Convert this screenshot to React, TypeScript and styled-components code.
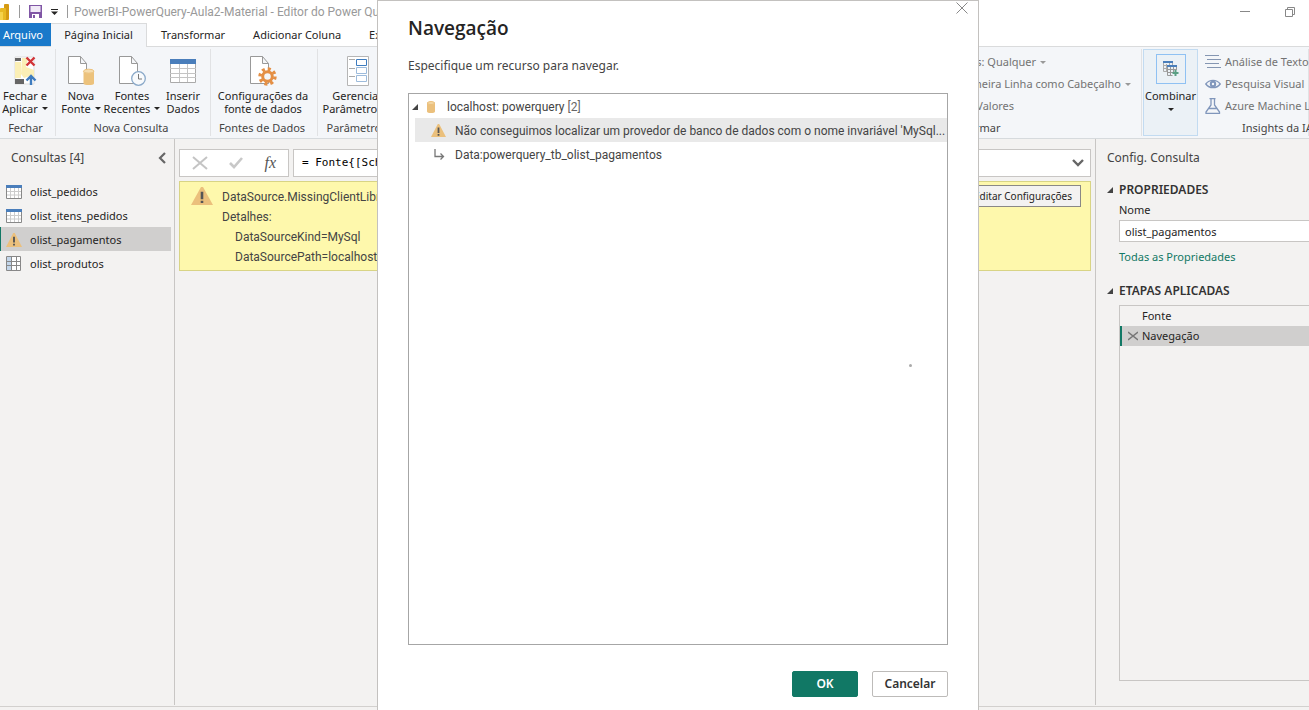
import React from 'react';
import styled, { createGlobalStyle, css } from 'styled-components';

const sans = '"Noto Sans", "Open Sans", sans-serif';
const ui = 'Roboto, "Noto Sans", sans-serif';
const green = '#117865';

const GlobalStyle = createGlobalStyle`
  *, *::before, *::after { box-sizing: border-box; }
  body {
    margin: 0;
    background: #f3f2f1;
    color: #252423;
    font-family: ${sans};
    font-size: 11px;
    line-height: 20px;
    overflow: hidden;
  }
  button, input { font: inherit; color: inherit; }
  button { margin: 0; padding: 0; border: 0; background: none; }
  h1, h2, h3, p, ul { margin: 0; padding: 0; font: inherit; }
  ul { list-style: none; }
  svg { display: block; flex: none; }
`;

const Page = styled.div`
  display: flex;
  flex-direction: column;
  min-height: 100vh;
  overflow: hidden;
`;

/* ---------- title bar ---------- */

const TitleBar = styled.header`
  display: flex;
  align-items: center;
  height: 23px;
  padding-right: 14px;
  background: #fff;
`;

const Divider = styled.span`
  width: 1px;
  height: 13px;
  background: #9a9a9a;
`;

const QuickAccess = styled.div`
  display: flex;
  align-items: center;
  gap: 9px;
  width: 74px;
`;

const WindowTitle = styled.h1`
  flex: 1;
  color: #999;
  font-family: ${ui};
  font-size: 12px;
  white-space: nowrap;
`;

const WindowButtons = styled.div`
  display: flex;
  align-items: center;
  gap: 34px;
  height: 20px;
`;

/* ---------- tabs ---------- */

const Tabs = styled.nav`
  display: flex;
  height: 24px;
  background: #fff;
  border-bottom: 1px solid #dadbdc;
`;

const Tab = styled.button<{ $kind?: 'file' | 'active' }>`
  flex: none;
  padding: 0 14px;
  height: 23px;
  color: #252423;
  white-space: nowrap;
  ${p => p.$kind === 'file' && css`
    width: 51px;
    padding: 0 3px;
    color: #fff;
    background: #1979ca;
    text-align: left;
  `}
  ${p => p.$kind === 'active' && css`
    width: 96px;
    height: 24px;
    padding: 0 0 1px;
    background: #f4f6f9;
    border: 1px solid #dadbdc;
    border-bottom: 0;
    border-left: 0;
  `}
`;

/* ---------- ribbon ---------- */

const RibbonBar = styled.section`
  display: flex;
  height: 92px;
  padding: 2px 0;
  background: #f4f6f9;
  border-bottom: 1px solid #d6dadd;
`;

const Spacer = styled.div`
  flex: 1;
`;

const Group = styled.div<{ $width: number }>`
  display: flex;
  flex-direction: column;
  flex: none;
  width: ${p => p.$width}px;
  border-right: 1px solid #e1e2e4;
  white-space: nowrap;
`;

const GroupBody = styled.div<{ $align?: 'start' | 'end' }>`
  display: flex;
  flex: 1;
  justify-content: ${p => (p.$align ? `flex-${p.$align}` : 'center')};
  padding-right: ${p => (p.$align === 'end' ? 10 : 2)}px;
`;

const GroupLabel = styled.div<{ $left?: boolean }>`
  height: 16px;
  padding: ${p => (p.$left ? '0 0 0 44px' : '0 4px 0 0')};
  color: #444;
  line-height: 16px;
  text-align: ${p => (p.$left ? 'left' : 'center')};
`;

const BigButton = styled.button<{ $width: number }>`
  display: flex;
  flex-direction: column;
  align-items: center;
  gap: 2px;
  width: ${p => p.$width}px;
  padding-top: 6px;
  line-height: 13px;
`;

const IconSlot = styled.span`
  display: flex;
  align-items: center;
  justify-content: center;
  height: 32px;
`;

const Line = styled.span`
  display: flex;
  align-items: center;
  justify-content: center;
  gap: 4px;
`;

const SmallList = styled.div<{ $width?: number }>`
  display: flex;
  flex-direction: column;
  width: ${p => (p.$width ? `${p.$width}px` : 'auto')};
  padding-top: 2px;
`;

const SmallButton = styled.button<{ $indent?: number }>`
  display: flex;
  align-items: center;
  gap: 4px;
  height: 22px;
  padding-left: ${p => p.$indent ?? 4}px;
  color: #737373;
  white-space: nowrap;
`;

const CombineButton = styled.button`
  display: flex;
  flex-direction: column;
  align-items: center;
  flex: none;
  gap: 5px;
  width: 55px;
  margin-left: 1px;
  padding-top: 4px;
  color: #252423;
  background: #ebf1f6;
  border: 1px solid #c2dbf1;
  line-height: 14px;
`;

const CombineIcon = styled.span`
  display: flex;
  align-items: center;
  justify-content: center;
  width: 30px;
  height: 30px;
  border: 1px solid #8fc1f3;
`;

/* ---------- workspace ---------- */

const Workspace = styled.div`
  display: flex;
  flex: 1;
`;

const StatusBar = styled.footer`
  height: 4px;
  margin-top: 1px;
  border-top: 1px solid #d2d0ce;
`;

const QueriesPane = styled.aside`
  flex: none;
  width: 175px;
  border-right: 1px solid #c8c6c4;
`;

const PaneHeader = styled.div`
  display: flex;
  align-items: center;
  justify-content: space-between;
  height: 38px;
  padding: 0 8px 0 11px;
`;

const PaneTitle = styled.h2`
  color: #444;
  font-size: 12px;
`;

const QueryList = styled.ul`
  padding: 2px 3px 0 0;
`;

const QueryItem = styled.li<{ $selected?: boolean }>`
  display: flex;
  align-items: center;
  gap: 8px;
  height: 24px;
  padding: 1px 0 0 5px;
  border-left: 1px solid ${p => (p.$selected ? green : 'transparent')};
  background: ${p => (p.$selected ? '#d0cfce' : 'transparent')};
`;

const Editor = styled.main`
  display: flex;
  flex: 1;
  flex-direction: column;
  gap: 4px;
  min-width: 0;
  padding: 10px 4px;
`;

const FormulaRow = styled.div`
  display: flex;
  gap: 4px;
`;

const FormulaButtons = styled.div`
  display: flex;
  align-items: center;
  justify-content: space-between;
  width: 110px;
  height: 28px;
  padding: 0 12px;
  background: #fff;
  border: 1px solid #c8c6c4;
`;

const FxButton = styled.button`
  color: #555;
  font-family: "Liberation Serif", serif;
  font-size: 16px;
  font-style: italic;
`;

const FormulaField = styled.div`
  display: flex;
  align-items: center;
  flex: 1;
  height: 28px;
  padding: 0 6px 0 8px;
  background: #fff;
  border: 1px solid #c8c6c4;
`;

const FormulaInput = styled.input`
  flex: 1;
  min-width: 0;
  padding: 0;
  border: 0;
  outline: 0;
  background: none;
  color: #000;
  font-family: "DejaVu Sans Mono", monospace;
`;

const ErrorPanel = styled.section`
  display: flex;
  align-items: flex-start;
  gap: 9px;
  height: 90px;
  padding: 3px 9px 0 11px;
  background: #fef8ac;
  border: 1px solid #d8d485;
`;

const WarningSlot = styled.span`
  padding-top: 2px;
`;

const ErrorText = styled.div`
  flex: 1;
  padding-top: 2px;
  color: #444;
  font-family: ${ui};
  font-size: 12px;
  white-space: nowrap;
`;

const Indented = styled.p`
  padding-left: 13px;
`;

const EditButton = styled.button`
  width: 116px;
  height: 22px;
  background: #f3f2f1;
  border: 1px solid #8a8886;
  font-size: 10px;
  line-height: 20px;
  white-space: nowrap;
`;

const SettingsPane = styled.aside`
  display: flex;
  flex-direction: column;
  flex: none;
  width: 214px;
  padding-bottom: 24px;
  border-left: 1px solid #c8c6c4;
`;

const SectionTitle = styled.h3`
  display: flex;
  align-items: center;
  gap: 6px;
  height: 20px;
  padding-left: 11px;
  font-size: 12px;
  font-weight: 600;
  color: #333;
`;

const Properties = styled.div`
  padding-top: 3px;
`;

const Field = styled.div`
  display: flex;
  flex-direction: column;
  padding: 0 0 7px 23px;
`;

const NameInput = styled.input`
  height: 22px;
  min-width: 0;
  padding: 0 5px;
  background: #fff;
  border: 1px solid #c8c6c4;
  border-right: 0;
  border-radius: 0;
  outline: 0;
`;

const Link = styled.a`
  height: 32px;
  padding-top: 4px;
  color: ${green};
  text-decoration: none;
  line-height: 22px;
`;

const Steps = styled.ul`
  flex: 1;
  margin: 4px 0 0 23px;
  border: 1px solid #c8c6c4;
  border-right: 0;
`;

const Step = styled.li<{ $selected?: boolean }>`
  display: flex;
  align-items: center;
  gap: 4px;
  height: 20px;
  padding-left: ${p => (p.$selected ? 6 : 20)}px;
  border-left: 2px solid ${p => (p.$selected ? green : 'transparent')};
  background: ${p => (p.$selected ? '#d0cfce' : 'transparent')};
`;

/* ---------- dialog ---------- */

const Overlay = styled.div`
  position: fixed;
  inset: 0;
  display: flex;
  justify-content: center;
  padding-left: 47px;
`;

const Dialog = styled.section`
  position: relative;
  display: flex;
  flex-direction: column;
  width: 602px;
  padding: 12px 30px 13px;
  background: #fff;
  border: 1px solid #c3c1bf;
  border-bottom: 0;
`;

const CloseButton = styled.button`
  position: absolute;
  top: 1px;
  right: 10px;
`;

const DialogTitle = styled.h2`
  height: 43px;
  color: #252423;
  font-family: "Open Sans", sans-serif;
  font-size: 19px;
  font-weight: 600;
  line-height: 30px;
`;

const DialogText = styled.p`
  height: 37px;
  color: #444;
  font-size: 12px;
`;

const Tree = styled.ul`
  position: relative;
  flex: 1;
  border: 1px solid #a6a6a6;
  color: #444;
  font-family: ${ui};
  font-size: 12px;
`;

const TreeItem = styled.li<{ $child?: boolean; $selected?: boolean }>`
  display: flex;
  align-items: center;
  height: 24px;
  margin-left: ${p => (p.$child ? 6 : 0)}px;
  padding: ${p => (p.$child ? '1px 0 0 16px' : '1px 0 0 3px')};
  background: ${p => (p.$selected ? '#e9e9e9' : 'transparent')};
  white-space: nowrap;
`;

const TreeIcon = styled.span<{ $width: number }>`
  display: flex;
  flex: none;
  width: ${p => p.$width}px;
`;

const Muted = styled.span`
  color: #666;
`;

const Dot = styled.span`
  position: absolute;
  left: 93%;
  top: 49%;
  width: 3px;
  height: 3px;
  border-radius: 50%;
  background: #aaa;
`;

const Actions = styled.div`
  display: flex;
  justify-content: flex-end;
  gap: 14px;
  padding-top: 26px;
`;

const ActionButton = styled.button<{ $primary?: boolean }>`
  width: ${p => (p.$primary ? 66 : 76)}px;
  height: 26px;
  border: 1px solid ${p => (p.$primary ? green : '#bdbbb9')};
  border-radius: 2px;
  background: ${p => (p.$primary ? green : '#fff')};
  color: ${p => (p.$primary ? '#fff' : '#333')};
  font-size: 12px;
  font-weight: 600;
`;

/* ---------- drawings ---------- */

const Caret = ({ color = '#252423' }: { color?: string }) => (
  <svg width="6" height="3" viewBox="0 0 6 3"><path d="M0 0h6L3 3z" fill={color} /></svg>
);

const Expander = () => (
  <svg width="6" height="6" viewBox="0 0 6 6"><path d="M6 0v6H0z" fill="#444" /></svg>
);

const LogoIcon = () => (
  <svg width="10" height="16" viewBox="0 0 10 16">
    <rect x="4" y="0" width="5" height="16" rx="1" fill="#d59a12" />
    <rect x="0" y="4" width="6" height="12" rx="1" fill="#e8b923" />
    <rect x="0" y="8" width="3" height="8" fill="#f5d24a" />
  </svg>
);

const SaveIcon = () => (
  <svg width="13" height="13" viewBox="0 0 13 13">
    <path d="M0 0h13v13H0z" fill="#8056a5" />
    <path d="M1.500 1h10v6h-10z" fill="#f1eaf7" />
    <path d="M3 9h7v4H3z" fill="#fff" />
    <path d="M4 10h2v3H4z" fill="#8056a5" />
  </svg>
);

const QuickMenuIcon = () => (
  <svg width="7" height="6" viewBox="0 0 7 6"><path d="M0 0h7v1H0zM0 2.500h7L3.500 6z" fill="#252423" /></svg>
);

const MinimizeIcon = () => (
  <svg width="11" height="11" viewBox="0 0 11 11"><path d="M0 5.500h10" stroke="#888" /></svg>
);

const RestoreIcon = () => (
  <svg width="10" height="10" viewBox="0 0 10 10" fill="none" stroke="#888">
    <path d="M.5 2.500h7v7h-7zM2.500 2.500v-2h7v7h-2" />
  </svg>
);

const PageShape = () => (
  <path d="M1.500.5h12l6 7v20h-18zM13.500.5v7h6" fill="#fff" stroke="#999" />
);

const CloseApplyIcon = () => (
  <svg width="24" height="30" viewBox="0 0 24 30">
    <path d="M2 1h19v27H2z" fill="#fff" stroke="#ddd" />
    <path d="M2 6h6v16H2zM9 2h6l-2 9 8 3v10l-4-4-6 2-3-4z" fill="#fbefb6" />
    <path d="M2 2h6v3H2zM2 23h9v5H2z" fill="#666" />
    <path d="M13.500 1.500l8 8M21.500 1.500l-8 8" stroke="#d13438" strokeWidth="2.400" />
    <path d="M18 29V20M13.500 24.500L18 20l4.500 4.500" stroke="#3e7cbf" strokeWidth="2.400" fill="none" />
  </svg>
);

const NewSourceIcon = () => (
  <svg width="28" height="30" viewBox="0 0 28 30">
    <PageShape />
    <path d="M16.500 15v12.500c0 2 10.500 2 10.500 0V15z" fill="#ecc27c" />
    <ellipse cx="21.700" cy="15.200" rx="5.200" ry="2" fill="#f5dcae" stroke="#ecc27c" />
  </svg>
);

const RecentIcon = () => (
  <svg width="28" height="30" viewBox="0 0 28 30">
    <PageShape />
    <circle cx="20.500" cy="22.500" r="6.800" fill="#f8fafc" stroke="#8aa9c9" strokeWidth="1.300" />
    <path d="M20.500 18v5h3.500" fill="none" stroke="#777" />
  </svg>
);

const TableIcon = () => (
  <svg width="26" height="24" viewBox="0 0 26 24">
    <path d="M.5 1h25v22.500H.5z" fill="#fff" stroke="#aaa" />
    <path d="M9.500 5v18M17.500 5v18M0 9.500h26M0 14.500h26M0 18.500h26" stroke="#c4c4c4" />
    <path d="M0 0h26v5H0z" fill="#4a7ebb" />
  </svg>
);

const SourceSettingsIcon = () => (
  <svg width="28" height="30" viewBox="0 0 28 30">
    <PageShape />
    <circle cx="18.500" cy="20.500" r="7.500" fill="none" stroke="#e48f45" strokeWidth="3.400" strokeDasharray="3 2.890" />
    <circle cx="18.500" cy="20.500" r="4.800" fill="#f4f6f9" stroke="#e48f45" strokeWidth="3" />
  </svg>
);

const ParametersIcon = () => (
  <svg width="22" height="30" viewBox="0 0 22 30">
    <path d="M.5.5h21v29H.5z" fill="#fff" stroke="#b5b5b5" />
    <path d="M2 3.500h6M2 12.500h6M2 20.500h6" stroke="#aaa" />
    <path d="M9.500 3.500h10v6h-10z" fill="#fff" stroke="#3e7cbf" />
    <path d="M9.500 11.500h10v6h-10zM9.500 19.500h10v6h-10z" fill="#fff" stroke="#9dbbdb" />
  </svg>
);

const CombineTablesIcon = () => (
  <svg width="16" height="16" viewBox="0 0 16 16">
    <path d="M.5 2v8.500H4M3.500 3v7M6.500 2v2M9.500 2v2M0 4.500h4M0 7.500h4" stroke="#aaa" fill="none" />
    <path d="M0 0h10v2H0z" fill="#4a7ebb" />
    <path d="M4.500 6v8.500h5M7.500 6v8M10.500 6v5M13.500 6v3M4 8.500h10M4 11.500h6" stroke="#999" fill="none" />
    <path d="M4 4h10v2H4z" fill="#4a7ebb" />
    <path d="M12.500 9v6M9.500 12h6" stroke="#5aa085" strokeWidth="2" />
  </svg>
);

const TextIcon = () => (
  <svg width="16" height="14" viewBox="0 0 16 14">
    <path d="M0 .5h14M2 4.500h14M0 8.500h14M2 12.500h14" stroke="#8596b2" />
  </svg>
);

const EyeIcon = () => (
  <svg width="16" height="10" viewBox="0 0 16 10" fill="none" stroke="#8096bb" strokeWidth="1.400">
    <path d="M.8 5C4.500.2 11.500.2 15.200 5 11.500 9.800 4.500 9.800.8 5z" />
    <circle cx="8" cy="5" r="2.200" strokeWidth="2" />
  </svg>
);

const FlaskIcon = () => (
  <svg width="16" height="16" viewBox="0 0 16 16" fill="none" stroke="#8096bb" strokeWidth="1.300">
    <path d="M4.500.7h6M6 1v6L1 14v1.300h13.500V14L9.500 7V1M3.800 10.500h8" />
  </svg>
);

const TableGlyph = () => (
  <svg width="14" height="12" viewBox="0 0 16 14">
    <path d="M.5.5h15v13H.5zM1 5h14M8 5v8" fill="none" stroke="#aaa" />
  </svg>
);

const QueryTableIcon = () => (
  <svg width="16" height="14" viewBox="0 0 16 14">
    <path d="M.5.5h15v13H.5z" fill="#fff" stroke="#888" />
    <path d="M4.500 3v10M8.500 3v10M12.500 3v10M1 6.500h14M1 10h14" stroke="#ccc" />
    <path d="M0 0h16v3H0z" fill="#4a7ebb" />
  </svg>
);

const QueryGridIcon = () => (
  <svg width="16" height="16" viewBox="0 0 16 16">
    <path d="M.5.5h14v14H.5z" fill="#fff" stroke="#888" />
    <path d="M1 1h5v13H1z" fill="#c3d6ea" />
    <path d="M5.500 1v13M10.500 1v13M1 5.500h13M1 9.500h13" stroke="#888" />
  </svg>
);

const WarningIcon = ({ width, height }: { width: number; height: number }) => (
  <svg width={width} height={height} viewBox="0 0 22 19" preserveAspectRatio="none">
    <path d="M10 0h2l10 19H0z" fill="#ebc07c" />
    <path d="M9.700 5h2.600v8H9.700zM9.700 14.500h2.600V17H9.700z" fill="#555" />
  </svg>
);

const CollapseIcon = () => (
  <svg width="8" height="12" viewBox="0 0 8 12"><path d="M7 1L2 6l5 5" fill="none" stroke="#666" strokeWidth="2.200" /></svg>
);

const ExpandIcon = () => (
  <svg width="12" height="8" viewBox="0 0 12 8"><path d="M1 1l5 5 5-5" fill="none" stroke="#666" strokeWidth="2.400" /></svg>
);

const CancelIcon = () => (
  <svg width="16" height="14" viewBox="0 0 16 14"><path d="M1 1l14 12M15 1L1 13" stroke="#c4c4c4" strokeWidth="2" /></svg>
);

const CheckIcon = () => (
  <svg width="14" height="12" viewBox="0 0 14 12"><path d="M1 6l4 4 8-9" fill="none" stroke="#c8c8c8" strokeWidth="2.600" /></svg>
);

const DeleteIcon = () => (
  <svg width="10" height="10" viewBox="0 0 10 10"><path d="M0 1l10 8M10 1L0 9" stroke="#777" strokeWidth="1.400" /></svg>
);

const DialogCloseIcon = () => (
  <svg width="12" height="12" viewBox="0 0 12 12"><path d="M.5.5l11 11M11.500.5l-11 11" stroke="#888" /></svg>
);

const DatabaseIcon = () => (
  <svg width="8" height="12" viewBox="0 0 8 12">
    <path d="M0 1.500v9c0 2 8 2 8 0v-9z" fill="#ebc07c" />
    <ellipse cx="4" cy="2" rx="3.500" ry="1.500" fill="#f3d7a4" stroke="#ebc07c" />
  </svg>
);

const BranchIcon = () => (
  <svg width="14" height="12" viewBox="0 0 14 12" fill="none" stroke="#777" strokeWidth="1.300">
    <path d="M4 0v7.500h8M9.500 4.500l3 3-3 3" />
  </svg>
);

/* ---------- page ---------- */

const queries = [
  { name: 'olist_pedidos', icon: <QueryTableIcon /> },
  { name: 'olist_itens_pedidos', icon: <QueryTableIcon /> },
  { name: 'olist_pagamentos', icon: <WarningIcon width={16} height={14} />, selected: true },
  { name: 'olist_produtos', icon: <QueryGridIcon /> },
];

function Ribbon() {
  return (
    <RibbonBar>
      <Group $width={56}>
        <GroupBody $align="start">
          <BigButton $width={50}>
            <IconSlot><CloseApplyIcon /></IconSlot>
            <span><Line>Fechar e</Line><Line>Aplicar <Caret /></Line></span>
          </BigButton>
        </GroupBody>
        <GroupLabel>Fechar</GroupLabel>
      </Group>
      <Group $width={155}>
        <GroupBody>
          <BigButton $width={46}>
            <IconSlot><NewSourceIcon /></IconSlot>
            <span><Line>Nova</Line><Line>Fonte <Caret /></Line></span>
          </BigButton>
          <BigButton $width={56}>
            <IconSlot><RecentIcon /></IconSlot>
            <span><Line>Fontes</Line><Line>Recentes <Caret /></Line></span>
          </BigButton>
          <BigButton $width={46}>
            <IconSlot><TableIcon /></IconSlot>
            <span><Line>Inserir</Line><Line>Dados</Line></span>
          </BigButton>
        </GroupBody>
        <GroupLabel>Nova Consulta</GroupLabel>
      </Group>
      <Group $width={107}>
        <GroupBody>
          <BigButton $width={100}>
            <IconSlot><SourceSettingsIcon /></IconSlot>
            <span><Line>Configurações da</Line><Line>fonte de dados</Line></span>
          </BigButton>
        </GroupBody>
        <GroupLabel>Fontes de Dados</GroupLabel>
      </Group>
      <Group $width={82}>
        <GroupBody>
          <BigButton $width={76}>
            <IconSlot><ParametersIcon /></IconSlot>
            <span><Line>Gerenciar</Line><Line>Parâmetros <Caret /></Line></span>
          </BigButton>
        </GroupBody>
        <GroupLabel>Parâmetros</GroupLabel>
      </Group>
      <Spacer />
      <Group $width={342}>
        <GroupBody $align="end">
          <SmallList>
            <SmallButton $indent={8}>Tipo de Dados: Qualquer <Caret color="#999" /></SmallButton>
            <SmallButton><TableGlyph />Usar a Primeira Linha como Cabeçalho <Caret color="#999" /></SmallButton>
            <SmallButton $indent={6}><TableGlyph />Substituir Valores</SmallButton>
          </SmallList>
        </GroupBody>
        <GroupLabel>Transformar</GroupLabel>
      </Group>
      <CombineButton>
        <CombineIcon><CombineTablesIcon /></CombineIcon>
        Combinar
        <Caret />
      </CombineButton>
      <Group $width={111}>
        <GroupBody $align="start">
          <SmallList $width={104}>
            <SmallButton $indent={7}><TextIcon />Análise de Texto</SmallButton>
            <SmallButton $indent={7}><EyeIcon />Pesquisa Visual</SmallButton>
            <SmallButton $indent={7}><FlaskIcon />Azure Machine Learning</SmallButton>
          </SmallList>
        </GroupBody>
        <GroupLabel $left>Insights da IA</GroupLabel>
      </Group>
    </RibbonBar>
  );
}

export default function App() {
  return (
    <Page>
      <GlobalStyle />
      <TitleBar>
        <QuickAccess>
          <LogoIcon />
          <Divider />
          <SaveIcon />
          <QuickMenuIcon />
          <Divider />
        </QuickAccess>
        <WindowTitle>PowerBI-PowerQuery-Aula2-Material - Editor do Power Query</WindowTitle>
        <WindowButtons>
          <button aria-label="Minimizar"><MinimizeIcon /></button>
          <button aria-label="Restaurar"><RestoreIcon /></button>
        </WindowButtons>
      </TitleBar>
      <Tabs>
        <Tab $kind="file">Arquivo</Tab>
        <Tab $kind="active">Página Inicial</Tab>
        <Tab>Transformar</Tab>
        <Tab>Adicionar Coluna</Tab>
        <Tab>Exibição</Tab>
      </Tabs>
      <Ribbon />
      <Workspace>
        <QueriesPane>
          <PaneHeader>
            <PaneTitle>Consultas [4]</PaneTitle>
            <button aria-label="Recolher"><CollapseIcon /></button>
          </PaneHeader>
          <QueryList>
            {queries.map(q => (
              <QueryItem key={q.name} $selected={q.selected}>{q.icon}{q.name}</QueryItem>
            ))}
          </QueryList>
        </QueriesPane>
        <Editor>
          <FormulaRow>
            <FormulaButtons>
              <button aria-label="Cancelar fórmula"><CancelIcon /></button>
              <button aria-label="Confirmar fórmula"><CheckIcon /></button>
              <FxButton>fx</FxButton>
            </FormulaButtons>
            <FormulaField>
              <FormulaInput aria-label="Fórmula" defaultValue="= Fonte{[Schema=" />
              <button aria-label="Expandir"><ExpandIcon /></button>
            </FormulaField>
          </FormulaRow>
          <ErrorPanel>
            <WarningSlot><WarningIcon width={22} height={18} /></WarningSlot>
            <ErrorText>
              <p>DataSource.MissingClientLibrary</p>
              <p>Detalhes:</p>
              <Indented>DataSourceKind=MySql</Indented>
              <Indented>DataSourcePath=localhost;</Indented>
            </ErrorText>
            <EditButton>Editar Configurações</EditButton>
          </ErrorPanel>
        </Editor>
        <SettingsPane>
          <PaneHeader><PaneTitle>Config. Consulta</PaneTitle></PaneHeader>
          <Properties>
            <SectionTitle><Expander />PROPRIEDADES</SectionTitle>
            <Field>
              <label htmlFor="query-name">Nome</label>
              <NameInput id="query-name" defaultValue="olist_pagamentos" />
              <Link href="#propriedades">Todas as Propriedades</Link>
            </Field>
          </Properties>
          <SectionTitle><Expander />ETAPAS APLICADAS</SectionTitle>
          <Steps>
            <Step>Fonte</Step>
            <Step $selected><DeleteIcon />Navegação</Step>
          </Steps>
        </SettingsPane>
      </Workspace>
      <StatusBar />
      <Overlay>
        <Dialog role="dialog" aria-labelledby="dialog-title">
          <CloseButton aria-label="Fechar"><DialogCloseIcon /></CloseButton>
          <DialogTitle id="dialog-title">Navegação</DialogTitle>
          <DialogText>Especifique um recurso para navegar.</DialogText>
          <Tree>
            <TreeItem>
              <TreeIcon $width={15}><Expander /></TreeIcon>
              <TreeIcon $width={20}><DatabaseIcon /></TreeIcon>
              <span>localhost: powerquery <Muted>[2]</Muted></span>
            </TreeItem>
            <TreeItem $child $selected>
              <TreeIcon $width={24}><WarningIcon width={15} height={13} /></TreeIcon>
              Não conseguimos localizar um provedor de banco de dados com o nome invariável 'MySql...
            </TreeItem>
            <TreeItem $child>
              <TreeIcon $width={24}><BranchIcon /></TreeIcon>
              Data:powerquery_tb_olist_pagamentos
            </TreeItem>
            <Dot />
          </Tree>
          <Actions>
            <ActionButton $primary>OK</ActionButton>
            <ActionButton>Cancelar</ActionButton>
          </Actions>
        </Dialog>
      </Overlay>
    </Page>
  );
}
